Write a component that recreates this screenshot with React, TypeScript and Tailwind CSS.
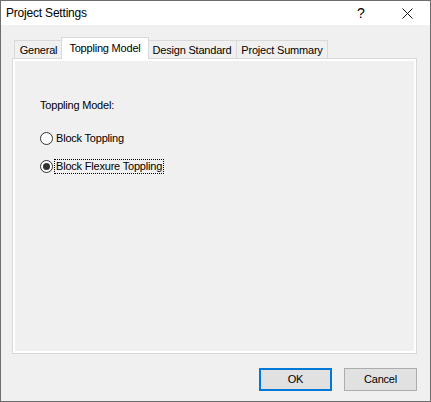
import React from "react";

const font = { fontFamily: '"Liberation Sans", Arial, sans-serif' };

function Tab({ label, w, selected }: { label: string; w: string; selected?: boolean }) {
  if (selected) {
    return (
      <div
        className={`relative z-10 -ml-[2px] -mr-[1px] -mb-px flex h-[22px] items-center justify-center border border-b-0 border-[#d9d9d9] bg-white text-[11px] tracking-[-0.2px] text-black ${w}`}
      >
        {label}
      </div>
    );
  }
  return (
    <div
      className={`-ml-px flex h-[18px] items-center justify-center border border-b-0 border-[#d9d9d9] bg-[#f0f0f0] pt-[1px] text-[11px] tracking-[-0.2px] text-black ${w}`}
    >
      {label}
    </div>
  );
}

function Radio({ label, checked, focused }: { label: string; checked?: boolean; focused?: boolean }) {
  return (
    <div className="flex h-[13px] items-center">
      <div className="flex h-[13px] w-[13px] items-center justify-center rounded-full border border-[#333333] bg-white">
        {checked && <div className="h-[7px] w-[7px] rounded-full bg-[#333333]" />}
      </div>
      <span
        className={`ml-px flex h-[15px] items-center px-px text-[11px] leading-[13px] tracking-[-0.2px] text-black border border-dotted ${
          focused ? "border-black" : "border-transparent"
        }`}
      >
        {label}
      </span>
    </div>
  );
}

export default function App() {
  return (
    <div style={font} className="flex h-[402px] w-[431px] flex-col border border-[#6d6d6d] bg-[#f0f0f0]">
      {/* Title bar */}
      <div className="flex h-[24px] items-center bg-white">
        <span className="pl-[5px] text-[12px] tracking-[-0.2px] text-black">Project Settings</span>
        <div className="ml-auto flex h-full">
          <div className="flex h-full w-[46px] items-center justify-center text-[14px] text-black">?</div>
          <div className="flex h-full w-[46px] items-center justify-center">
            <svg width="11" height="11" viewBox="0 0 11 11">
              <path d="M0.5 0.5 L10.5 10.5 M10.5 0.5 L0.5 10.5" stroke="#111" strokeWidth="1" fill="none" />
            </svg>
          </div>
        </div>
      </div>

      {/* Body */}
      <div className="flex flex-col pl-[11px] pt-[12px]">
        {/* Tabs */}
        <div className="flex h-[21px] items-end pl-[3px]">
          <Tab label="General" w="w-[49px]" />
          <Tab label="Toppling Model" w="w-[88px]" selected />
          <Tab label="Design Standard" w="w-[90px]" />
          <Tab label="Project Summary" w="w-[92px]" />
        </div>

        {/* Panel */}
        <div className="h-[296px] w-[405px] border border-[#d9d9d9] bg-white p-[2px]">
          <div className="flex h-full w-full flex-col bg-[#f0f0f0] pl-[25px] pt-[38px]">
            <div className="h-[13px] text-[11px] leading-[13px] tracking-[-0.2px] text-black">Toppling Model:</div>
            <div className="mt-[20px]">
              <Radio label="Block Toppling" />
            </div>
            <div className="mt-[15px]">
              <Radio label="Block Flexure Toppling" checked focused />
            </div>
          </div>
        </div>

        {/* Buttons */}
        <div className="mt-[14px] flex w-[405px] justify-end gap-[12px]">
          <button className="flex h-[23px] w-[73px] items-center justify-center border-2 border-[#0078d7] bg-[#e1e1e1] text-[11px] tracking-[-0.2px] text-black">
            OK
          </button>
          <button className="flex h-[23px] w-[73px] items-center justify-center border border-[#adadad] bg-[#e1e1e1] text-[11px] tracking-[-0.2px] text-black">
            Cancel
          </button>
        </div>
      </div>
    </div>
  );
}
